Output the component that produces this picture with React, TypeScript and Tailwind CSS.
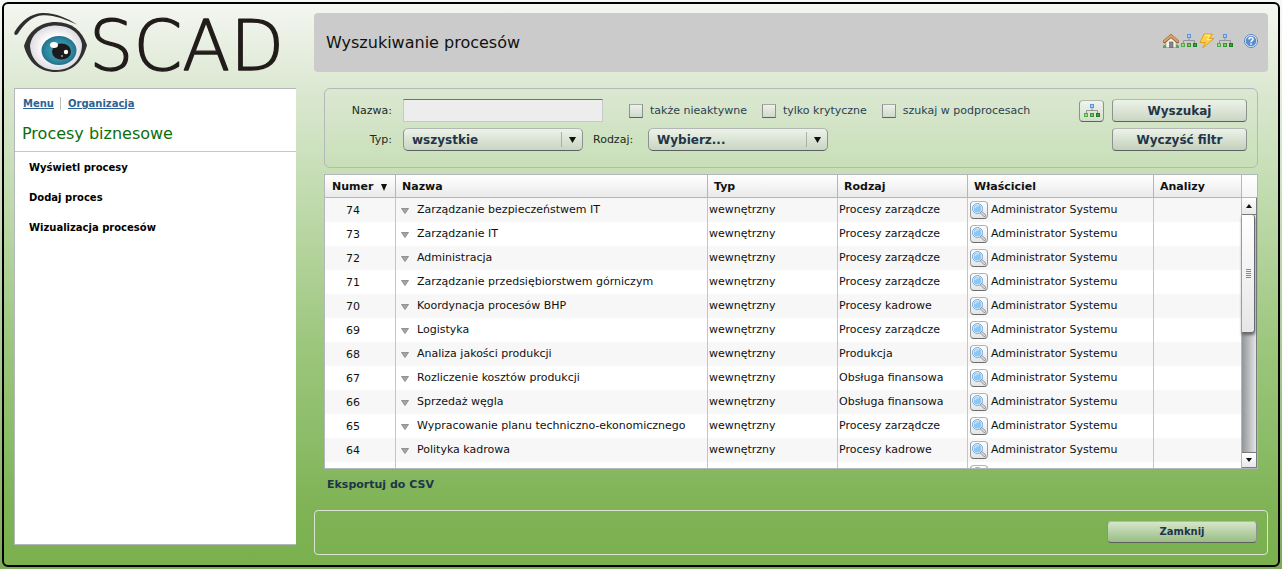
import React from "react";

type Row = { id: number; name: string; kind: string };

const rows: Row[] = [
  { id: 74, name: "Zarządzanie bezpieczeństwem IT", kind: "Procesy zarządcze" },
  { id: 73, name: "Zarządzanie IT", kind: "Procesy zarządcze" },
  { id: 72, name: "Administracja", kind: "Procesy zarządcze" },
  { id: 71, name: "Zarządzanie przedsiębiorstwem górniczym", kind: "Procesy zarządcze" },
  { id: 70, name: "Koordynacja procesów BHP", kind: "Procesy kadrowe" },
  { id: 69, name: "Logistyka", kind: "Procesy zarządcze" },
  { id: 68, name: "Analiza jakości produkcji", kind: "Produkcja" },
  { id: 67, name: "Rozliczenie kosztów produkcji", kind: "Obsługa finansowa" },
  { id: 66, name: "Sprzedaż węgla", kind: "Obsługa finansowa" },
  { id: 65, name: "Wypracowanie planu techniczno-ekonomicznego", kind: "Procesy zarządcze" },
  { id: 64, name: "Polityka kadrowa", kind: "Procesy kadrowe" },
];

function Logo() {
  return (
    <svg viewBox="0 0 282 70" className="block h-[70px] w-[282px] overflow-visible" role="img" aria-label="OSCAD">
      <defs>
        <radialGradient id="iris">
          <stop offset="0" stopColor="#3fa3b5" />
          <stop offset="0.7" stopColor="#2f8ba3" />
          <stop offset="1" stopColor="#256f8c" />
        </radialGradient>
        <radialGradient id="white">
          <stop offset="0.5" stopColor="#ffffff" />
          <stop offset="1" stopColor="#dedee2" />
        </radialGradient>
      </defs>
      <path d="M0.500 24C7 13 17 5.500 28 5C41 4.500 53 10 63 16.500C51 11.500 40 6.700 29 7.300C18 8 10 16 4 25.500C2.500 28 -0.500 27 0.500 24Z" fill="#2d2d2d" />
      <path d="M10 38C14 24 25 14 42 14C58 14 68 23 73 37C69 53 59 64 42 64C25 64 14 54 10 38Z" fill="#303030" />
      <path d="M16 38C17 26 28 17.500 42 17.500C57 17.500 66 26 68 36C68 52 57 62 42 62C27 62 17 52 16 38Z" fill="url(#white)" />
      <ellipse cx="45" cy="42.500" rx="17.500" ry="14.500" fill="url(#iris)" />
      <ellipse cx="47.500" cy="43.500" rx="9.500" ry="8" fill="#1d1a1b" />
      <ellipse cx="40" cy="37" rx="4" ry="3" fill="#fff" />
      <circle cx="52" cy="44" r="2.200" fill="#fff" />
      <circle cx="48" cy="48" r="0.800" fill="#fff" />
      <text x="75" y="62" fontFamily="'DejaVu Sans', sans-serif" fontWeight="200" fontSize="70" fill="#211c1a" stroke="#211c1a" strokeWidth="1.300" strokeLinejoin="round">SCAD</text>
    </svg>
  );
}

function TreeIcon() {
  return (
    <svg viewBox="0 0 16 16" className="size-4 shrink-0" aria-hidden="true">
      <path d="M8 5V7.500M2.500 10V7.500H13.500V10" fill="none" stroke="#93979b" />
      <rect x="6" y="1" width="4" height="4" fill="#5b93dc" />
      <rect x="7" y="2" width="2" height="2" fill="#a5cdf8" />
      <rect x="0" y="10" width="4" height="4" fill="#52ac44" />
      <rect x="1" y="11" width="2" height="2" fill="#9bd88a" />
      <rect x="6" y="10" width="4" height="4" fill="#35992d" />
      <rect x="7" y="11" width="2" height="2" fill="#77c765" />
      <rect x="12" y="10" width="4" height="4" fill="#1b811c" />
      <rect x="13" y="11" width="2" height="2" fill="#3fa238" />
    </svg>
  );
}

function HomeIcon() {
  return (
    <svg viewBox="0 0 16 16" className="size-4" aria-hidden="true">
      <path d="M0 15V13L2 11.500H14L16 13V15Z" fill="#5da04d" />
      <path d="M3 14.500V7L8 3L13 7V14.500Z" fill="#f3f1ed" stroke="#a6a19a" strokeWidth="0.600" />
      <rect x="6.500" y="9" width="3.500" height="5.500" fill="#858585" stroke="#5f5f5f" strokeWidth="0.600" />
      <path d="M1.500 8.500L8 3L14.500 8.500" fill="none" stroke="#8b5425" strokeWidth="3.400" strokeLinecap="round" />
      <path d="M1.500 8.200L8 2.800L14.500 8.200" fill="none" stroke="#d9a066" strokeWidth="2.200" strokeLinecap="round" />
    </svg>
  );
}

function BoltIcon() {
  return (
    <svg viewBox="0 0 16 16" className="size-4" aria-hidden="true">
      <path d="M5 1H13.500L10.500 5.500H15L3.500 15L6.500 9.500H1Z" fill="#fbd34a" stroke="#dfa021" strokeLinejoin="round" />
      <path d="M6 2.200H11L8 6.500H12" fill="none" stroke="#ffefa5" />
    </svg>
  );
}

function HelpIcon() {
  return (
    <svg viewBox="0 0 14 14" className="size-[14px]" aria-hidden="true">
      <circle cx="7" cy="7" r="6.500" fill="#eaf2fc" stroke="#5c86be" />
      <circle cx="7" cy="7" r="5.300" fill="#5a8dcf" />
      <path d="M5 5.500C5 3 9 3 9 5.300C9 6.700 7 6.700 7 8.300" fill="none" stroke="#fff" strokeWidth="1.500" />
      <rect x="6.200" y="9.300" width="1.600" height="1.500" fill="#fff" />
    </svg>
  );
}

function MagnifierIcon() {
  return (
    <svg viewBox="0 0 16 16" className="size-4" aria-hidden="true">
      <path d="M9.500 9.500L13.500 13.500" stroke="#8f9194" strokeWidth="3" strokeLinecap="round" />
      <path d="M10 10L13.500 13.500" stroke="#dfe1e3" strokeWidth="1.400" strokeLinecap="round" />
      <circle cx="6.500" cy="6.500" r="4.500" fill="#8cc8f7" stroke="#fff" strokeWidth="1.200" />
      <circle cx="6.500" cy="6.500" r="5" fill="none" stroke="#6496cf" strokeWidth="0.900" />
      <path d="M3.800 6C4.300 4.300 6 3.500 7.800 4" fill="none" stroke="#c9e7ff" strokeWidth="1.200" />
    </svg>
  );
}

const glossy =
  "border border-t-[#b3b8b5] border-x-[#8d918f] border-b-[#5c605e] bg-gradient-to-b";

function DropDown({ id, value }: { id: string; value: string }) {
  return (
    <div className="relative w-[180px]">
      <select
        id={id}
        className={`${glossy} h-[23px] w-full appearance-none rounded-[5px] from-[#edf3e9] to-[#c9d5c2] pl-2 text-xs font-bold text-[#1f3549]`}
      >
        <option>{value}</option>
      </select>
      <span className="pointer-events-none absolute inset-y-1 right-0 flex w-[22px] items-center justify-center border-l border-[#a9b1a8]">
        <svg viewBox="0 0 7 6" className="h-1.5 w-[7px]" aria-hidden="true"><path d="M0 0H7L3.500 6Z" fill="#111" /></svg>
      </span>
    </div>
  );
}

function Check({ label }: { label: string }) {
  return (
    <label className="flex items-center gap-[7px] text-[11px] text-[#2b4152]">
      <input
        type="checkbox"
        className="size-[14px] appearance-none border border-t-[#a5aaa7] border-x-[#8d918f] border-b-[#5c605e] bg-gradient-to-b from-[#edf1ea] to-[#cfd8cb]"
      />
      {label}
    </label>
  );
}

function ScrollBar() {
  return (
    <div className="flex w-[16px] shrink-0 flex-col border-l border-[#b3b6ba]">
      <div className="h-[23px] shrink-0 border-b border-[#b3b6ba] bg-gradient-to-b from-white to-[#f4f4f4]" />
      <div className="flex min-h-0 flex-1 flex-col border-r border-[#777b80] bg-gradient-to-r from-[#8f959a] to-[#e6e6e6]">
        <button aria-label="W górę" className="flex h-[17px] shrink-0 items-center justify-center border-b border-[#777b80] bg-gradient-to-b from-white to-[#e8e8e8]">
          <svg viewBox="0 0 6 4" className="h-1 w-1.5"><path d="M3 0L6 4H0Z" fill="#111" /></svg>
        </button>
        <div className="flex h-[118px] w-[13px] shrink-0 flex-col items-center justify-center gap-px rounded-r-[3px] border-r border-b border-[#666a6e] bg-gradient-to-b from-white to-[#e6e6e6] shadow-[0_2px_3px_#666a6e]">
          <i className="h-px w-[5px] bg-[#888]" />
          <i className="h-px w-[5px] bg-[#888]" />
          <i className="h-px w-[5px] bg-[#888]" />
          <i className="h-px w-[5px] bg-[#888]" />
          <i className="h-px w-[5px] bg-[#888]" />
        </div>
        <button aria-label="W dół" className="mt-auto flex h-[16px] shrink-0 items-center justify-center border-y border-[#777b80] bg-gradient-to-b from-white to-[#e8e8e8]">
          <svg viewBox="0 0 6 4" className="h-1 w-1.5"><path d="M0 0H6L3 4Z" fill="#111" /></svg>
        </button>
      </div>
    </div>
  );
}

const headCell = "border-r border-b border-[#b3b6ba] px-1.5 pt-0.5 text-left font-bold";
const cell = "border-r border-[#c3c5c8] p-0 pl-px align-top leading-[23px] whitespace-nowrap";

function OwnerButton() {
  return (
    <button aria-label="Pokaż właściciela" className="mt-[3px] flex size-[18px] shrink-0 items-center justify-center rounded-[4px] border border-t-[#b5b5b5] border-x-[#9b9b9b] border-b-[#6b6b6b] bg-gradient-to-b from-white to-[#e4e4e4]">
      <MagnifierIcon />
    </button>
  );
}

function ProcessTable() {
  return (
    <div className="mt-1.5 flex h-[295px] border border-[#b3b6ba] bg-white">
      <div className="min-w-0 flex-1 overflow-hidden">
        <table className="w-full table-fixed border-separate border-spacing-0 text-[11px] text-[#111]">
          <colgroup>
            <col className="w-[71px]" />
            <col />
            <col className="w-[130px]" />
            <col className="w-[130px]" />
            <col className="w-[186px]" />
            <col className="w-[87px]" />
          </colgroup>
          <thead>
            <tr className="h-[23px] bg-gradient-to-b from-white to-[#e9e9e9]">
              <th className={headCell}>
                <span className="flex items-center justify-between px-px">
                  Numer
                  <svg viewBox="0 0 6 7" className="mr-px h-[7px] w-1.5" aria-hidden="true"><path d="M0 0H6L3 7Z" fill="#111" /></svg>
                </span>
              </th>
              <th className={headCell}>Nazwa</th>
              <th className={headCell}>Typ</th>
              <th className={headCell}>Rodzaj</th>
              <th className={headCell}>Właściciel</th>
              <th className="border-b border-[#b3b6ba] px-1.5 pt-0.5 text-left font-bold">Analizy</th>
            </tr>
          </thead>
          <tbody>
            {rows.map((r) => (
              <tr key={r.id} className="h-6 odd:bg-[#f7f7f7]">
                <td className="border-r border-[#c3c5c8] p-0 pt-px pr-3.5 text-center align-top leading-[23px]">{r.id}</td>
                <td className={cell}>
                  <span className="flex items-center gap-2 pl-1">
                    <svg viewBox="0 0 8 6" className="mt-0.5 h-1.5 w-2" aria-hidden="true"><path d="M0.500 0.500H7.500L4 5.500Z" fill="#a5a5a5" stroke="#777" strokeWidth="0.700" /></svg>
                    {r.name}
                  </span>
                </td>
                <td className={cell}>wewnętrzny</td>
                <td className={cell}>{r.kind}</td>
                <td className={cell}>
                  <span className="flex gap-[3px] pl-px">
                    <OwnerButton />
                    Administrator Systemu
                  </span>
                </td>
                <td />
              </tr>
            ))}
            <tr className="h-6">
              <td className={cell} />
              <td className={cell} />
              <td className={cell} />
              <td className={cell} />
              <td className={cell}>
                <span className="flex pl-px"><OwnerButton /></span>
              </td>
              <td />
            </tr>
          </tbody>
        </table>
      </div>
      <ScrollBar />
    </div>
  );
}

export default function App() {
  return (
    <div className="flex min-h-screen bg-gradient-to-b from-[#f7f8f5] to-[#7da95a] p-0.5 font-['DejaVu_Sans',sans-serif] text-[11px] text-[#1c2a1c]">
      <div className="flex flex-1 gap-[18px] rounded-md border-2 border-black bg-[linear-gradient(#f4f6f1_0%,#dce8d2_15%,#c8dfb8_29%,#9cc67c_61%,#8bbc67_78%,#7fb355_90%,#7ab04e_100%)] px-2.5">
        <aside className="flex w-[282px] shrink-0 flex-col pt-1 pb-5">
          <Logo />
          <div className="mt-2.5 flex-1 border-t border-b border-l border-[#b3b6ba] bg-white">
            <nav className="flex h-7 items-center px-2 text-[10px] font-bold text-[#2b6394]">
              <a href="#menu" className="underline">Menu</a>
              <span className="mr-[7px] ml-1.5 h-[13px] w-px bg-[#b9c0c4]" />
              <a href="#organizacja" className="underline">Organizacja</a>
            </nav>
            <h2 className="h-[35px] border-b border-[#c6c6c6] pl-[7px] text-base leading-[34px] text-[#0b6e0b]">Procesy biznesowe</h2>
            <ul className="px-3.5 pt-px text-[10px] leading-[30px] font-bold text-black">
              <li><a href="#lista">Wyświetl procesy</a></li>
              <li><a href="#dodaj">Dodaj proces</a></li>
              <li><a href="#wizualizacja">Wizualizacja procesów</a></li>
            </ul>
          </div>
        </aside>

        <main className="flex min-w-0 flex-1 flex-col pt-[9px] pb-2.5">
          <header className="flex h-[59px] items-center justify-between rounded-[4px] bg-[#cbcbcb] pr-2.5 pl-3">
            <h1 className="text-base text-[#111]">Wyszukiwanie procesów</h1>
            <div className="flex items-center gap-0.5 pb-1">
              <button aria-label="Start"><HomeIcon /></button>
              <button aria-label="Struktura"><TreeIcon /></button>
              <button aria-label="Szybki dostęp"><BoltIcon /></button>
              <button aria-label="Procesy"><TreeIcon /></button>
              <button aria-label="Pomoc" className="ml-[9px]"><HelpIcon /></button>
            </div>
          </header>

          <div className="mt-4 px-2.5">
            <form className="rounded-md border border-[#b3b8bb] pt-2.5 pr-2.5 pb-4">
              <div className="flex h-[23px] items-center">
                <label htmlFor="nazwa" className="w-[67px] pt-px text-right">Nazwa:</label>
                <input id="nazwa" type="text" className="ml-[11px] h-[23px] w-[200px] border border-[#c6c9cc] border-t-[#707070] bg-[#ededed] px-2" />
                <div className="ml-[26px] flex gap-[15px] pt-px">
                  <Check label="także nieaktywne" />
                  <Check label="tylko krytyczne" />
                  <Check label="szukaj w podprocesach" />
                </div>
                <button type="button" aria-label="Wybierz z drzewa" className={`${glossy} ml-auto flex h-[22px] w-[25px] items-center justify-center rounded-[4px] from-[#f0f4ed] to-[#d3ddcd]`}>
                  <TreeIcon />
                </button>
                <button type="button" className={`${glossy} ml-2 h-[23px] w-[135px] rounded-[4px] from-[#edf3e9] to-[#cad6c3] text-xs font-bold text-[#1f3549]`}>Wyszukaj</button>
              </div>
              <div className="mt-1.5 flex h-[23px] items-center">
                <label htmlFor="typ" className="mr-[11px] w-[67px] pt-px text-right">Typ:</label>
                <DropDown id="typ" value="wszystkie" />
                <label htmlFor="rodzaj" className="w-[65px] pt-px pl-2.5">Rodzaj:</label>
                <DropDown id="rodzaj" value="Wybierz..." />
                <button type="reset" className={`${glossy} ml-auto h-[23px] w-[135px] rounded-[4px] from-[#edf3e9] to-[#c3d0bb] text-xs font-bold text-[#1f3549]`}>Wyczyść filtr</button>
              </div>
            </form>
            <ProcessTable />
            <a href="#csv" className="mt-[7px] ml-[3px] inline-block leading-[18px] font-bold text-[#1f3549]">Eksportuj do CSV</a>
          </div>

          <footer className="mt-auto flex h-[45px] items-center justify-end rounded-[4px] border border-[#dbe3d5] px-2.5 pb-0.5">
            <button type="button" className={`${glossy} h-[22px] w-[150px] rounded-[4px] from-[#d5e6cb] to-[#99bd83] text-[10px] font-bold text-[#1f3549]`}>Zamknij</button>
          </footer>
        </main>
      </div>
    </div>
  );
}
